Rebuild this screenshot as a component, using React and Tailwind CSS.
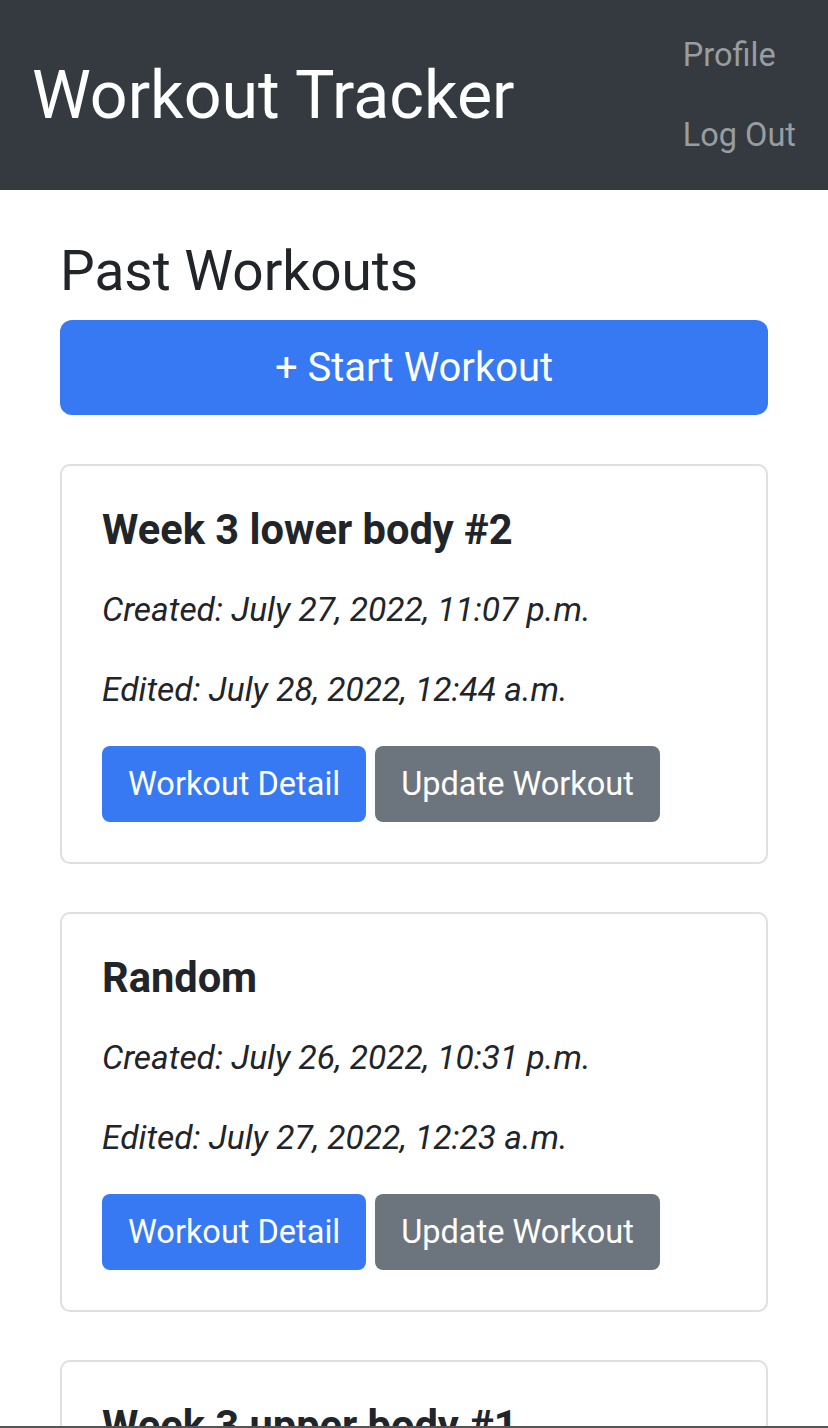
import React from 'react';

const workouts = [
  { id: 1, name: 'Week 3 lower body #2', created: 'July 27, 2022, 11:07 p.m.', edited: 'July 28, 2022, 12:44 a.m.' },
  { id: 2, name: 'Random', created: 'July 26, 2022, 10:31 p.m.', edited: 'July 27, 2022, 12:23 a.m.' },
  { id: 3, name: 'Week 3 upper body #1', created: 'July 25, 2022, 9:12 p.m.', edited: 'July 25, 2022, 11:40 p.m.' },
];

const WorkoutCard = ({ workout }) => (
  <div className="border-2 border-[#dfdfdf] rounded-[10px] px-10 pt-10 pb-[40px] mb-12">
    <h5 className="text-[41.6px] leading-[48px] font-bold text-[#212529]">{workout.name}</h5>
    <p className="mt-8 text-[33.5px] leading-[48px] italic text-[#212529]">Created: {workout.created}</p>
    <p className="mt-8 text-[33.5px] leading-[48px] italic text-[#212529]">Edited: {workout.edited}</p>
    <div className="mt-8 flex gap-[9px]">
      <button className="h-[76px] px-[26px] rounded-[8px] bg-[#3679f2] text-white text-[32.5px]">Workout Detail</button>
      <button className="h-[76px] px-[26px] rounded-[8px] bg-[#6c757d] text-white text-[32.5px]">Update Workout</button>
    </div>
  </div>
);

const App = () => {
  return (
    <div className="h-[1428px] overflow-hidden flex flex-col bg-white font-['Roboto',sans-serif]">
      {/* Navbar */}
      <nav className="h-[190px] shrink-0 bg-[#343a40] flex items-center justify-between pl-[32px] pr-8">
        <span className="text-[66.3px] text-white leading-none">Workout Tracker</span>
        <div className="flex flex-col self-start pt-[15px]">
          <a className="h-20 flex items-center text-[32.5px] text-[#9a9da0]">Profile</a>
          <a className="h-20 flex items-center text-[32.5px] text-[#9a9da0]">Log Out</a>
        </div>
      </nav>

      {/* Content */}
      <div className="flex-1 overflow-hidden px-[60px] pt-[48px]">
        <h3 className="text-[55px] leading-[67px] text-[#212529]">Past Workouts</h3>
        <button className="mt-[15px] w-full h-[95px] rounded-[12px] bg-[#3679f2] text-white text-[40px]">+ Start Workout</button>
        <div className="mt-[49px]">
          {workouts.map(w => (
            <WorkoutCard key={w.id} workout={w} />
          ))}
        </div>
      </div>
      <div className="h-[2px] shrink-0 bg-[#555]" />
    </div>
  );
};

export default App;
